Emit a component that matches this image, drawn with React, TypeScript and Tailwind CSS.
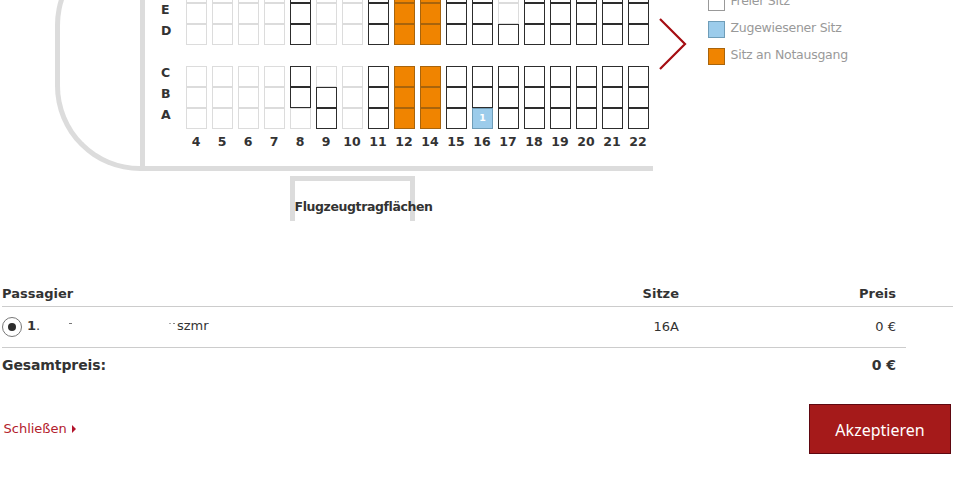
type SeatKind = "taken" | "free" | "exit" | "mine";

const ROWS = [4, 5, 6, 7, 8, 9, 10, 11, 12, 14, 15, 16, 17, 18, 19, 20, 21, 22];

const seatStyles: Record<SeatKind, string> = {
    taken: "border-[#dcdcdc] bg-white",
    free: "border-[#2d2d2d] bg-white",
    exit: "border-[#a8640c] bg-[#f08400]",
    mine: "border-[#6f9db8] bg-[#9ccceb]",
};

// seats that differ from the rest of their row
const special: Record<string, SeatKind> = {
    "8A": "taken",
    "9B": "free",
    "9A": "free",
    "16A": "mine",
    "17E": "taken",
    "17F": "taken",
};

function seatKind(row: number, letter: string): SeatKind {
    const key = `${row}${letter}`;
    if (special[key]) return special[key];
    if (row === 12 || row === 14) return "exit";
    if (row < 8 || row === 9 || row === 10) return "taken";
    return "free";
}

function SeatBlock({ letters }: { letters: string[] }) {
    return (
        <div className="flex">
            <div className="w-[26px] shrink-0 pl-px text-[12.5px] font-bold">
                {letters.map((letter) => (
                    <div key={letter} className="h-[21px] leading-[14px]">{letter === "F" ? null : letter}</div>
                ))}
            </div>
            <div className="flex gap-[5px]">
                {ROWS.map((row) => (
                    <div key={row} className="w-[21px]">
                        {letters.map((letter) => {
                            const kind = seatKind(row, letter);
                            return (
                                <div
                                    key={letter}
                                    className={`flex h-[21px] items-center justify-center border text-[9.5px] font-bold text-white ${seatStyles[kind]}`}
                                >
                                    {kind === "mine" ? "1" : null}
                                </div>
                            );
                        })}
                    </div>
                ))}
            </div>
        </div>
    );
}

function LegendItem({ color, label }: { color: string; label: string }) {
    return (
        <div className="flex h-[27px] items-start gap-[5px]">
            <span className={`h-[17px] w-[17px] border ${color}`} />
            <span className="-mt-px whitespace-nowrap pl-[0.5px] text-[12.5px] leading-[15px] tracking-[-0.25px] text-[#999]">{label}</span>
        </div>
    );
}

function SeatMap() {
    return (
        <div className="-mt-[60px] flex h-[231px]">
            <div className="ml-[55px] flex w-[598px] rounded-l-[85px] border-y-[5px] border-l-[5px] border-[#dcdcdc]">
                <div className="w-[85px] shrink-0 border-r-[5px] border-[#dcdcdc]" />
                <div className="ml-[15px] pt-[37px]">
                    <SeatBlock letters={["F", "E", "D"]} />
                    <div className="h-[21px]" />
                    <SeatBlock letters={["C", "B", "A"]} />
                    <div className="ml-[23px] mt-[5px] flex text-[12.5px] font-bold leading-[16px]">
                        {ROWS.map((row) => (
                            <span key={row} className="w-[26px] text-center">{row}</span>
                        ))}
                    </div>
                </div>
            </div>
            <svg className="ml-[6px] mt-[77px] h-[54px] w-[28px]" viewBox="0 0 28 54" fill="none">
                <path d="M1 2L26 27L1 52" stroke="#a50d12" strokeWidth="2.2" />
            </svg>
            <div className="ml-[21px] mt-[54px]">
                <LegendItem color="border-[#999] bg-white" label="Freier Sitz" />
                <LegendItem color="border-[#6f9db8] bg-[#9ccceb]" label="Zugewiesener Sitz" />
                <LegendItem color="border-[#a8640c] bg-[#f08400]" label="Sitz an Notausgang" />
            </div>
        </div>
    );
}

function PassengerTable() {
    return (
        <div className="ml-[2px] mt-[63px] w-[951px]">
            <div className="flex h-[23px] border-b border-[#ccc] text-[13px] font-bold leading-[19px]">
                <span className="w-[477px]">Passagier</span>
                <span className="w-[200px] text-right">Sitze</span>
                <span className="w-[217px] text-right">Preis</span>
            </div>
            <div className="flex h-[41px] w-[904px] border-b border-[#ccc] text-[13px]">
                <span className="mt-[10px] flex h-[20px] w-[20px] items-center justify-center rounded-full border border-[#777]">
                    <span className="h-[8px] w-[8px] rounded-full bg-[#2d2d2d]" />
                </span>
                <span className="ml-[5px] w-[42px] pt-[11px] leading-[16px]"><b>1</b>.</span>
                <span className="mt-[16px] h-px w-[3px] bg-[#777]" />
                <span className="ml-[97px] mt-[16px] h-px w-[2px] bg-[#aaa]" />
                <span className="ml-[2px] mt-[16px] h-px w-[2px] bg-[#888]" />
                <span className="ml-[2px] w-[302px] pt-[11px] leading-[16px]">szmr</span>
                <span className="w-[200px] pt-[12px] text-right leading-[16px]">16A</span>
                <span className="w-[217px] pt-[12px] text-right leading-[16px]">0 €</span>
            </div>
            <div className="flex w-[894px] justify-between pt-[8px] text-[14px] font-bold leading-[18px]">
                <span className="tracking-[-0.1px]">Gesamtpreis:</span>
                <span>0 €</span>
            </div>
        </div>
    );
}

export default function App() {
    return (
        <div className="h-[478px] w-[972px] overflow-hidden bg-white font-['DejaVu_Sans',sans-serif] text-[#333]">
            <div className="flow-root">
                <SeatMap />
            </div>
            <div className="ml-[290px] mt-[5px] h-[45px] w-[125px] border-x-[5px] border-t-[5px] border-[#dcdcdc] pt-[18px]">
                <span className="-ml-[0.5px] block whitespace-nowrap text-[12.5px] font-bold leading-[16px] tracking-[-0.4px]">Flugzeugtragflächen</span>
            </div>
            <PassengerTable />
            <div className="ml-[3px] mt-[30px] flex w-[948px] items-center justify-between">
                <a href="#" className="flex items-center gap-[5px] pl-[0.5px] text-[13px] text-[#b3202c]">
                    Schließen
                    <svg className="h-[8px] w-[4px]" viewBox="0 0 4 8">
                        <path d="M0 0L4 4L0 8Z" fill="#b3142c" />
                    </svg>
                </a>
                <button className="h-[50px] w-[142px] border border-[#5f0810] bg-[#a51a1a] pt-px font-['Noto_Sans','Open_Sans',sans-serif] text-[16px] text-white">
                    Akzeptieren
                </button>
            </div>
        </div>
    );
}
